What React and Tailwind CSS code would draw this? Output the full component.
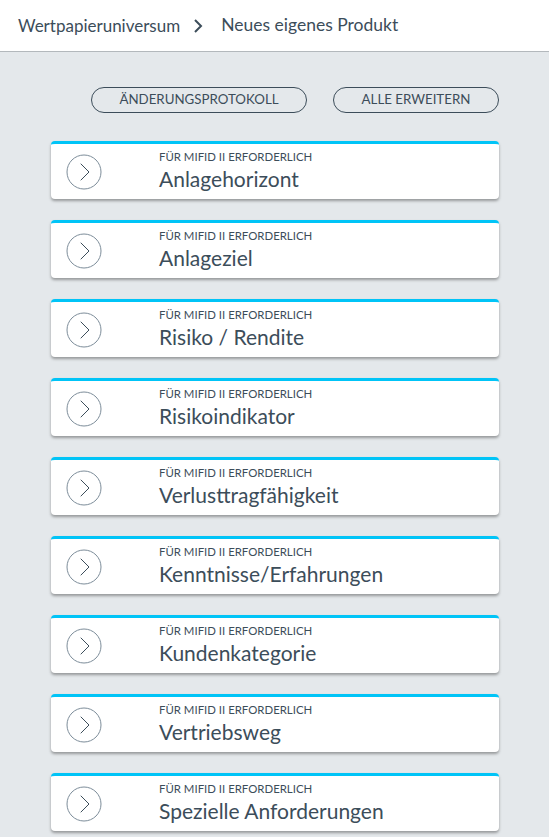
import React from "react";

const items = [
  "Anlagehorizont",
  "Anlageziel",
  "Risiko / Rendite",
  "Risikoindikator",
  "Verlusttragfähigkeit",
  "Kenntnisse/Erfahrungen",
  "Kundenkategorie",
  "Vertriebsweg",
  "Spezielle Anforderungen",
];

function CircleChevron() {
  return (
    <svg width="36" height="36" viewBox="0 0 36 36" fill="none">
      <circle cx="18" cy="18" r="17" stroke="#7d8d9a" strokeWidth="1" />
      <path d="M15 10 L23 18 L15 26" stroke="#3c4d5a" strokeWidth="1" strokeLinecap="round" strokeLinejoin="round" />
    </svg>
  );
}

export default function App() {
  return (
    <div className="min-h-[837px] bg-[#e4e8eb] text-[#3c4d5a]" style={{ fontFamily: "Lato, 'Noto Sans', sans-serif" }}>
      <div className="h-[52px] bg-white border-b border-[#b3b8bc] flex items-center pl-[18px] text-[17px]">
        <span>Wertpapieruniversum</span>
        <svg className="ml-[13px] mr-[18px]" width="10" height="16" viewBox="0 0 10 16" fill="none">
          <path d="M2 2 L8 8 L2 14" stroke="#3c4d5a" strokeWidth="2" />
        </svg>
        <span className="text-[17.5px]">Neues eigenes Produkt</span>
      </div>
      <div className="pl-[51px] pr-[50px] pt-[35px] pb-[5px]">
        <div className="flex justify-end gap-[26px]">
          <button className="w-[216px] h-[26px] rounded-full border border-[#3c4d5a] text-[13.3px] leading-none">
            ÄNDERUNGSPROTOKOLL
          </button>
          <button className="w-[166px] h-[26px] rounded-full border border-[#3c4d5a] text-[13.3px] leading-none">
            ALLE ERWEITERN
          </button>
        </div>
        <div className="mt-[28px] flex flex-col gap-[21px]">
          {items.map((t) => (
            <div key={t} className="h-[58px] bg-white rounded-[4px] border-t-[3px] border-[#00c4f7] shadow-[0_2px_3px_rgba(0,0,0,0.35)] flex">
              <div className="w-[108px] pl-[15px] flex items-center">
                <CircleChevron />
              </div>
              <div className="pt-[6px] flex flex-col">
                <div className="text-[11.4px] leading-[14px]">FÜR MIFID II ERFORDERLICH</div>
                <div className="text-[21px] leading-[24px] mt-[3px]">{t}</div>
              </div>
            </div>
          ))}
        </div>
      </div>
    </div>
  );
}
